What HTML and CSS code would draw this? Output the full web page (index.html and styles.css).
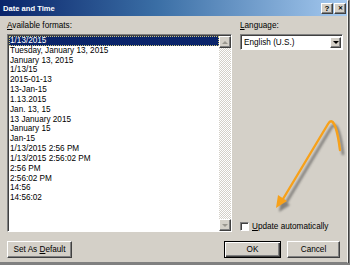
FILE: index.html
```html
<!DOCTYPE html>
<html lang="en">
<head>
  <meta charset="UTF-8" />
  <meta name="viewport" content="width=device-width, initial-scale=1.0"/>
  <title>Date and Time</title>
  <link rel="stylesheet" href="styles.css">
</head>
<body>
  <div class="window">
    <div class="titlebar">
      <span class="title">Date and Time</span>
      <div class="caption-btns">
        <span class="cap-btn">?</span>
        <span class="cap-btn close">&#x2715;</span>
      </div>
    </div>

    <div class="dialog">
      <div class="main">
        <div class="col-left">
          <div class="label"><u>A</u>vailable formats:</div>
          <div class="listbox">
            <ul class="items">
              <li class="selected">1/13/2015</li>
              <li>Tuesday, January 13, 2015</li>
              <li>January 13, 2015</li>
              <li>1/13/15</li>
              <li>2015-01-13</li>
              <li>13-Jan-15</li>
              <li>1.13.2015</li>
              <li>Jan. 13, 15</li>
              <li>13 January 2015</li>
              <li>January 15</li>
              <li>Jan-15</li>
              <li>1/13/2015 2:56 PM</li>
              <li>1/13/2015 2:56:02 PM</li>
              <li>2:56 PM</li>
              <li>2:56:02 PM</li>
              <li>14:56</li>
              <li>14:56:02</li>
            </ul>
            <div class="scrollbar">
              <div class="sb-btn"><span class="tri up"></span></div>
              <div class="sb-track"></div>
              <div class="sb-btn"><span class="tri down"></span></div>
            </div>
          </div>
        </div>

        <div class="col-right">
          <div class="label"><u>L</u>anguage:</div>
          <div class="combo">
            <span class="combo-text">English (U.S.)</span>
            <div class="combo-btn"><span class="tri down dark"></span></div>
          </div>
          <div class="check">
            <span class="box"></span>
            <span><u>U</u>pdate automatically</span>
          </div>
        </div>
      </div>

      <div class="buttons">
        <button class="btn wide">Set As <u>D</u>efault</button>
        <span class="spacer"></span>
        <button class="btn default">OK</button>
        <button class="btn">Cancel</button>
      </div>
    </div>

    <!-- annotation arrow drawn on top of the dialog -->
    <svg class="annotation" width="350" height="265" viewBox="0 0 350 265">
      <defs>
        <filter id="blur" x="-20%" y="-20%" width="140%" height="140%">
          <feGaussianBlur stdDeviation="1.3"/>
        </filter>
      </defs>
      <g transform="translate(3 4)" opacity="0.55" filter="url(#blur)">
        <path d="M340 150 C338 134 334 114 328 124 L283 199" fill="none" stroke="#404040" stroke-width="2.6" stroke-linecap="round"/>
        <polygon points="276,208 278,195 287,201" fill="#404040"/>
      </g>
      <path d="M340 150 C338 134 334 114 328 124 L283 199" fill="none" stroke="#f7a11a" stroke-width="2.4" stroke-linecap="round"/>
      <polygon points="276,208 278,195 287,201" fill="#f7a11a"/>
    </svg>
  </div>
</body>
</html>
```

FILE: styles.css
```css
body {
  margin: 0;
  background: #808080;
  font-family: 'Liberation Sans', Arial, sans-serif;
  font-size: 8.2px;
  color: #000;
}

.window {
  position: relative;
  width: 347px;
  height: 262px;
  background: #d4d0c8;
  border-right: 1px solid #f4f3ef;
  border-bottom: 1px solid #808080;
  box-shadow: 1px 1px 0 #404040;
}

.titlebar {
  height: 16px;
  display: flex;
  align-items: center;
  background: linear-gradient(to right, #0a246a, #3a6ea5 45%, #a6caf0);
  padding-left: 3px;
}

.title {
  flex: 1;
  color: #fff;
  font-weight: bold;
  font-size: 7.6px;
}

.caption-btns {
  display: flex;
  gap: 1px;
  margin-right: 1px;
}

.cap-btn {
  width: 10px;
  height: 9px;
  background: #d4d0c8;
  border: 1px solid;
  border-color: #fff #404040 #404040 #fff;
  box-shadow: inset -1px -1px 0 #808080;
  font-size: 8px;
  font-weight: bold;
  line-height: 9px;
  text-align: center;
}

.cap-btn.close {
  font-size: 6px;
}

.dialog {
  padding: 4px 0 0 7px;
}

.main {
  display: flex;
  gap: 8px;
  height: 212px;
}

.label {
  height: 12px;
  line-height: 12px;
  margin-bottom: 2px;
}

.col-left {
  width: 225px;
}

.listbox {
  display: flex;
  height: 196px;
  background: #fff;
  border: 1px solid;
  border-color: #808080 #fff #fff #808080;
}

.items {
  flex: 1;
  list-style: none;
  margin: 0;
  padding: 0;
  border-top: 1px solid #404040;
  border-left: 1px solid #404040;
}

.items li {
  height: 9.84px;
  line-height: 9.84px;
  padding-left: 1px;
  white-space: nowrap;
}

.items li.selected {
  background: #0a246a;
  color: #fff;
  outline: 1px dotted #c9c27a;
  outline-offset: -1px;
}

.scrollbar {
  width: 12px;
  display: flex;
  flex-direction: column;
  border-top: 1px solid #404040;
  background-color: #ecebe6;
  background-image: repeating-conic-gradient(#fff 0 25%, #d4d0c8 0 50%);
  background-size: 2px 2px;
}

.sb-track {
  flex: 1;
}

.sb-btn {
  height: 10px;
  background: #d4d0c8;
  border: 1px solid;
  border-color: #fff #404040 #404040 #fff;
  box-shadow: inset -1px -1px 0 #808080;
  display: flex;
  align-items: center;
  justify-content: center;
}

.tri {
  width: 0;
  height: 0;
  border-left: 3px solid transparent;
  border-right: 3px solid transparent;
}

.tri.up {
  border-bottom: 3px solid #9a978f;
}

.tri.down {
  border-top: 3px solid #9a978f;
}

.tri.down.dark {
  border-top-color: #000;
}

.col-right {
  width: 103px;
  display: flex;
  flex-direction: column;
}

.combo {
  height: 13px;
  display: flex;
  align-items: center;
  background: #fff;
  border: 1px solid;
  border-color: #808080 #fff #fff #808080;
  box-shadow: inset 1px 1px 0 #404040;
  padding: 1px 1px 0 3px;
}

.combo-text {
  flex: 1;
}

.combo-btn {
  width: 9px;
  height: 9px;
  background: #d4d0c8;
  border: 1px solid;
  border-color: #fff #404040 #404040 #fff;
  box-shadow: inset -1px -1px 0 #808080;
  display: flex;
  align-items: center;
  justify-content: center;
}

.check {
  margin-top: auto;
  margin-bottom: 1px;
  display: flex;
  align-items: center;
  gap: 3px;
  height: 10px;
}

.check .box {
  width: 7px;
  height: 7px;
  background: #fff;
  border: 1px solid;
  border-color: #808080 #fff #fff #808080;
  box-shadow: inset 1px 1px 0 #404040;
}

.buttons {
  display: flex;
  margin-top: 9px;
  padding-right: 7px;
}

.spacer {
  flex: 1;
}

.btn {
  height: 17px;
  padding: 0;
  background: #d4d0c8;
  border: 1px solid;
  border-color: #fff #404040 #404040 #fff;
  box-shadow: inset -1px -1px 0 #808080;
  font-family: inherit;
  font-size: 8.2px;
  color: #000;
  width: 53px;
}

.btn.wide {
  width: 65px;
}

.btn.default {
  width: 57px;
  margin-right: 6px;
  border: 1px solid #000;
  box-shadow: inset 1px 1px 0 #fff, inset -1px -1px 0 #404040, inset -2px -2px 0 #808080;
}

.annotation {
  position: absolute;
  top: 0;
  left: 0;
  pointer-events: none;
}
```
